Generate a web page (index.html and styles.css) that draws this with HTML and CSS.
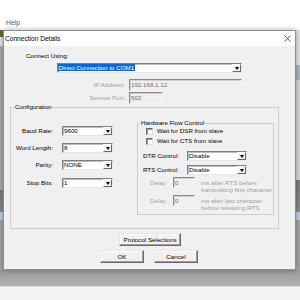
FILE: index.html
```html
<!DOCTYPE html>
<html>
<head>
<meta charset="utf-8">
<link rel="stylesheet" href="styles.css">
</head>
<body>
<div class="menubar"><span class="menu">Help</span></div>
<div class="desk">
  <div class="side-left"></div>
  <div class="dialog">
    <div class="titlebar">
      <span class="title">Connection Details</span>
      <svg class="close" viewBox="0 0 7 7"><path d="M0.5 0.5L6.5 6.5M6.5 0.5L0.5 6.5" stroke="#333" stroke-width="0.8" fill="none"/></svg>
    </div>
    <div class="client">
      <div class="using">Connect Using:</div>
      <div class="combo combo-wide"><span class="val"><span class="sel">Direct Connection to COM1</span></span><span class="drop"></span></div>
      <div class="field field-ip"><span class="field-label">IP Address:</span><span class="input ip">192.168.1.12</span></div>
      <div class="field"><span class="field-label">Service Port:</span><span class="input port">502</span></div>
      <div class="group config">
        <div class="legend">Configuration</div>
        <div class="config-body">
          <div class="params">
            <div class="prow"><span class="plabel">Baud Rate:</span><div class="combo combo-param"><span class="val">9600</span><span class="drop"></span></div></div>
            <div class="prow"><span class="plabel">Word Length:</span><div class="combo combo-param"><span class="val">8</span><span class="drop"></span></div></div>
            <div class="prow"><span class="plabel">Parity:</span><div class="combo combo-param"><span class="val">NONE</span><span class="drop"></span></div></div>
            <div class="prow last"><span class="plabel">Stop Bits:</span><div class="combo combo-param"><span class="val">1</span><span class="drop"></span></div></div>
          </div>
          <div class="group hw">
            <div class="legend legend-hw">Hardware Flow Control</div>
            <div class="check"><span class="box"></span><span>Wait for DSR from slave</span></div>
            <div class="check"><span class="box"></span><span>Wait for CTS from slave</span></div>
            <div class="crow"><span class="clabel">DTR Control:</span><div class="combo combo-ctl"><span class="val">Disable</span><span class="drop"></span></div></div>
            <div class="crow"><span class="clabel">RTS Control:</span><div class="combo combo-ctl"><span class="val">Disable</span><span class="drop"></span></div></div>
            <div class="drow"><span class="dlabel">Delay</span><span class="input dinput">0</span><span class="dtext">ms after RTS before<br>transmitting first character</span></div>
            <div class="drow"><span class="dlabel">Delay</span><span class="input dinput">0</span><span class="dtext">ms after last character<br>before releasing RTS</span></div>
          </div>
        </div>
      </div>
      <div class="btn proto">Protocol Selections</div>
      <div class="actions"><div class="btn">OK</div><div class="btn">Cancel</div></div>
    </div>
  </div>
  <div class="side-right"></div>
</div>
<div class="band"></div>
<div class="status"></div>
</body>
</html>
```
FILE: styles.css
```css
* { box-sizing: border-box; }
html, body { margin: 0; padding: 0; }
body {
  width: 300px; height: 300px; overflow: hidden; background: #fff;
  font-family: "Liberation Sans", Arial, sans-serif; font-size: 6.2px; color: #000;
}
.menubar { height: 30px; padding: 19px 0 0 6px; background: #fff; }
.menu { display: block; line-height: 8px; font-size: 6.8px; color: #5a5a5a; }

.desk { display: flex; height: 240px; }
.side-left {
  width: 3px;
  background: linear-gradient(to bottom, #6e6333 0, #6e6333 7px, #e4e4e4 7px, #e4e4e4 16px, #aaaaaa 16px, #aaaaaa 160px, #7c7c7c 160px, #8a8a8a 182px, #bcd0e4 182px, #bcd0e4 190px, #a4a4a4 190px);
}
.side-right {
  width: 4px;
  background: linear-gradient(to bottom, #e2e2e2 0, #e2e2e2 35px, #a9b5c4 35px, #a9b5c4 50px, #d4d4d4 50px, #d4d4d4 150px, #7a7a7a 150px, #8a8a8a 182px, #bcd0e4 182px, #bcd0e4 190px, #a4a4a4 190px);
}
.dialog {
  width: 293px; height: 240px; display: flex; flex-direction: column;
  border: 1px solid #8f8f8f; background: #f0f0f0;
  position: relative; z-index: 1; box-shadow: 0 0 5px rgba(0,0,0,.35);
}
.titlebar { height: 15px; flex: none; display: flex; align-items: center; background: #fff; padding-left: 1px; }
.title { flex: 1; font-size: 6.6px; line-height: 15px; }
.close { width: 7px; height: 7px; margin-right: 4px; }

.client { flex: 1; display: flex; flex-direction: column; align-items: flex-start; }
.using { margin: 6px 0 0 22px; line-height: 8px; }

.combo {
  display: flex; align-items: center; height: 10px; background: #fff;
  border: 1px solid; border-color: #7f7f7f #e8e8e8 #e8e8e8 #7f7f7f;
  box-shadow: inset 1px 1px 0 #bdbdbd;
}
.combo .val { flex: 1; line-height: 8px; padding-left: 1px; white-space: nowrap; overflow: hidden; }
.combo-wide { margin: 3px 0 0 53px; width: 185px; }
.combo-wide .val { padding-left: 0; }
.sel { background: #0a67d0; color: #fff; padding: 0 0.5px; }
.drop {
  width: 9px; height: 8px; flex: none; background: #f0f0f0;
  border: 1px solid; border-color: #fff #696969 #696969 #fff;
  display: flex; align-items: center; justify-content: center;
}
.drop::after {
  content: ""; width: 0; height: 0;
  border-left: 2.5px solid transparent; border-right: 2.5px solid transparent; border-top: 3px solid #000;
}

.field { display: flex; align-items: center; height: 12px; margin-top: 1px; }
.field-ip { margin-top: 6px; }
.field-label { width: 121px; margin-right: 4px; text-align: right; color: #a0a0a0; line-height: 8px; }
.input {
  display: block; height: 12px; background: #f0f0f0; color: #6d6d6d;
  border: 1px solid; border-color: #8a8a8a #f4f4f4 #f4f4f4 #8a8a8a;
  box-shadow: inset 1px 1px 0 #d0d0d0;
  padding-left: 1px; line-height: 10px; white-space: nowrap;
}
.ip { width: 113px; }
.port { width: 34px; }

.group { border: 1px solid #cdcdcd; display: flex; flex-direction: column; align-items: flex-start; }
.legend { margin: -5px 0 0 3px; padding: 0 1px; height: 8px; line-height: 8px; background: #f0f0f0; }
.config { margin: 3px 0 0 6px; width: 269px; height: 122px; }
.config-body { display: flex; align-items: flex-start; }
.params { width: 126px; padding-top: 15px; display: flex; flex-direction: column; }
.prow { display: flex; align-items: center; height: 10px; margin-top: 7px; }
.prow:first-child { margin-top: 0; }
.prow.last { margin-top: 8px; }
.plabel { width: 42px; margin-right: 9px; text-align: right; line-height: 8px; }
.combo-param { width: 51px; }

.hw { width: 137px; height: 92px; margin-top: 12px; }
.legend-hw { margin-left: 2px; }
.check { display: flex; align-items: center; height: 8px; margin-left: 8px; line-height: 8px; }
.check + .check { margin-top: 2px; }
.box {
  width: 7px; height: 7px; margin-right: 4px; background: #fff;
  border: 1px solid; border-color: #6a6a6a #e0e0e0 #e0e0e0 #6a6a6a;
  box-shadow: inset 1px 1px 0 #9a9a9a;
}
.crow { display: flex; align-items: center; height: 10px; margin: 6px 0 0 5px; }
.crow + .crow { margin-top: 4px; }
.clabel { width: 44px; line-height: 8px; }
.combo-ctl { width: 60px; }

.drow { display: flex; align-items: flex-start; height: 14px; margin: 2px 0 0 12px; color: #a0a0a0; }
.drow + .drow { margin-top: 4px; }
.dlabel { width: 23px; line-height: 11px; }
.dinput { width: 22px; height: 11px; line-height: 9px; }
.dtext { margin: 1.5px 0 0 6px; width: 71px; overflow: hidden; line-height: 7px; white-space: nowrap; }

.btn {
  height: 13px; display: flex; align-items: center; justify-content: center; line-height: 8px;
  background: #f0f0f0; border: 1px solid; border-color: #e6e6e6 #696969 #696969 #e6e6e6;
  box-shadow: inset -1px -1px 0 #a0a0a0, inset 1px 1px 0 #fff;
}
.proto { margin: 4px 0 0 115px; width: 62px; }
.actions { display: flex; gap: 10px; margin: 4px 0 0 96px; }
.actions .btn { width: 44px; }

.band { height: 16px; background: linear-gradient(#999999, #b2b2b2); }
.status { height: 14px; background: #f4f4f4; border-top: 1px solid #dcdcdc; }
```
